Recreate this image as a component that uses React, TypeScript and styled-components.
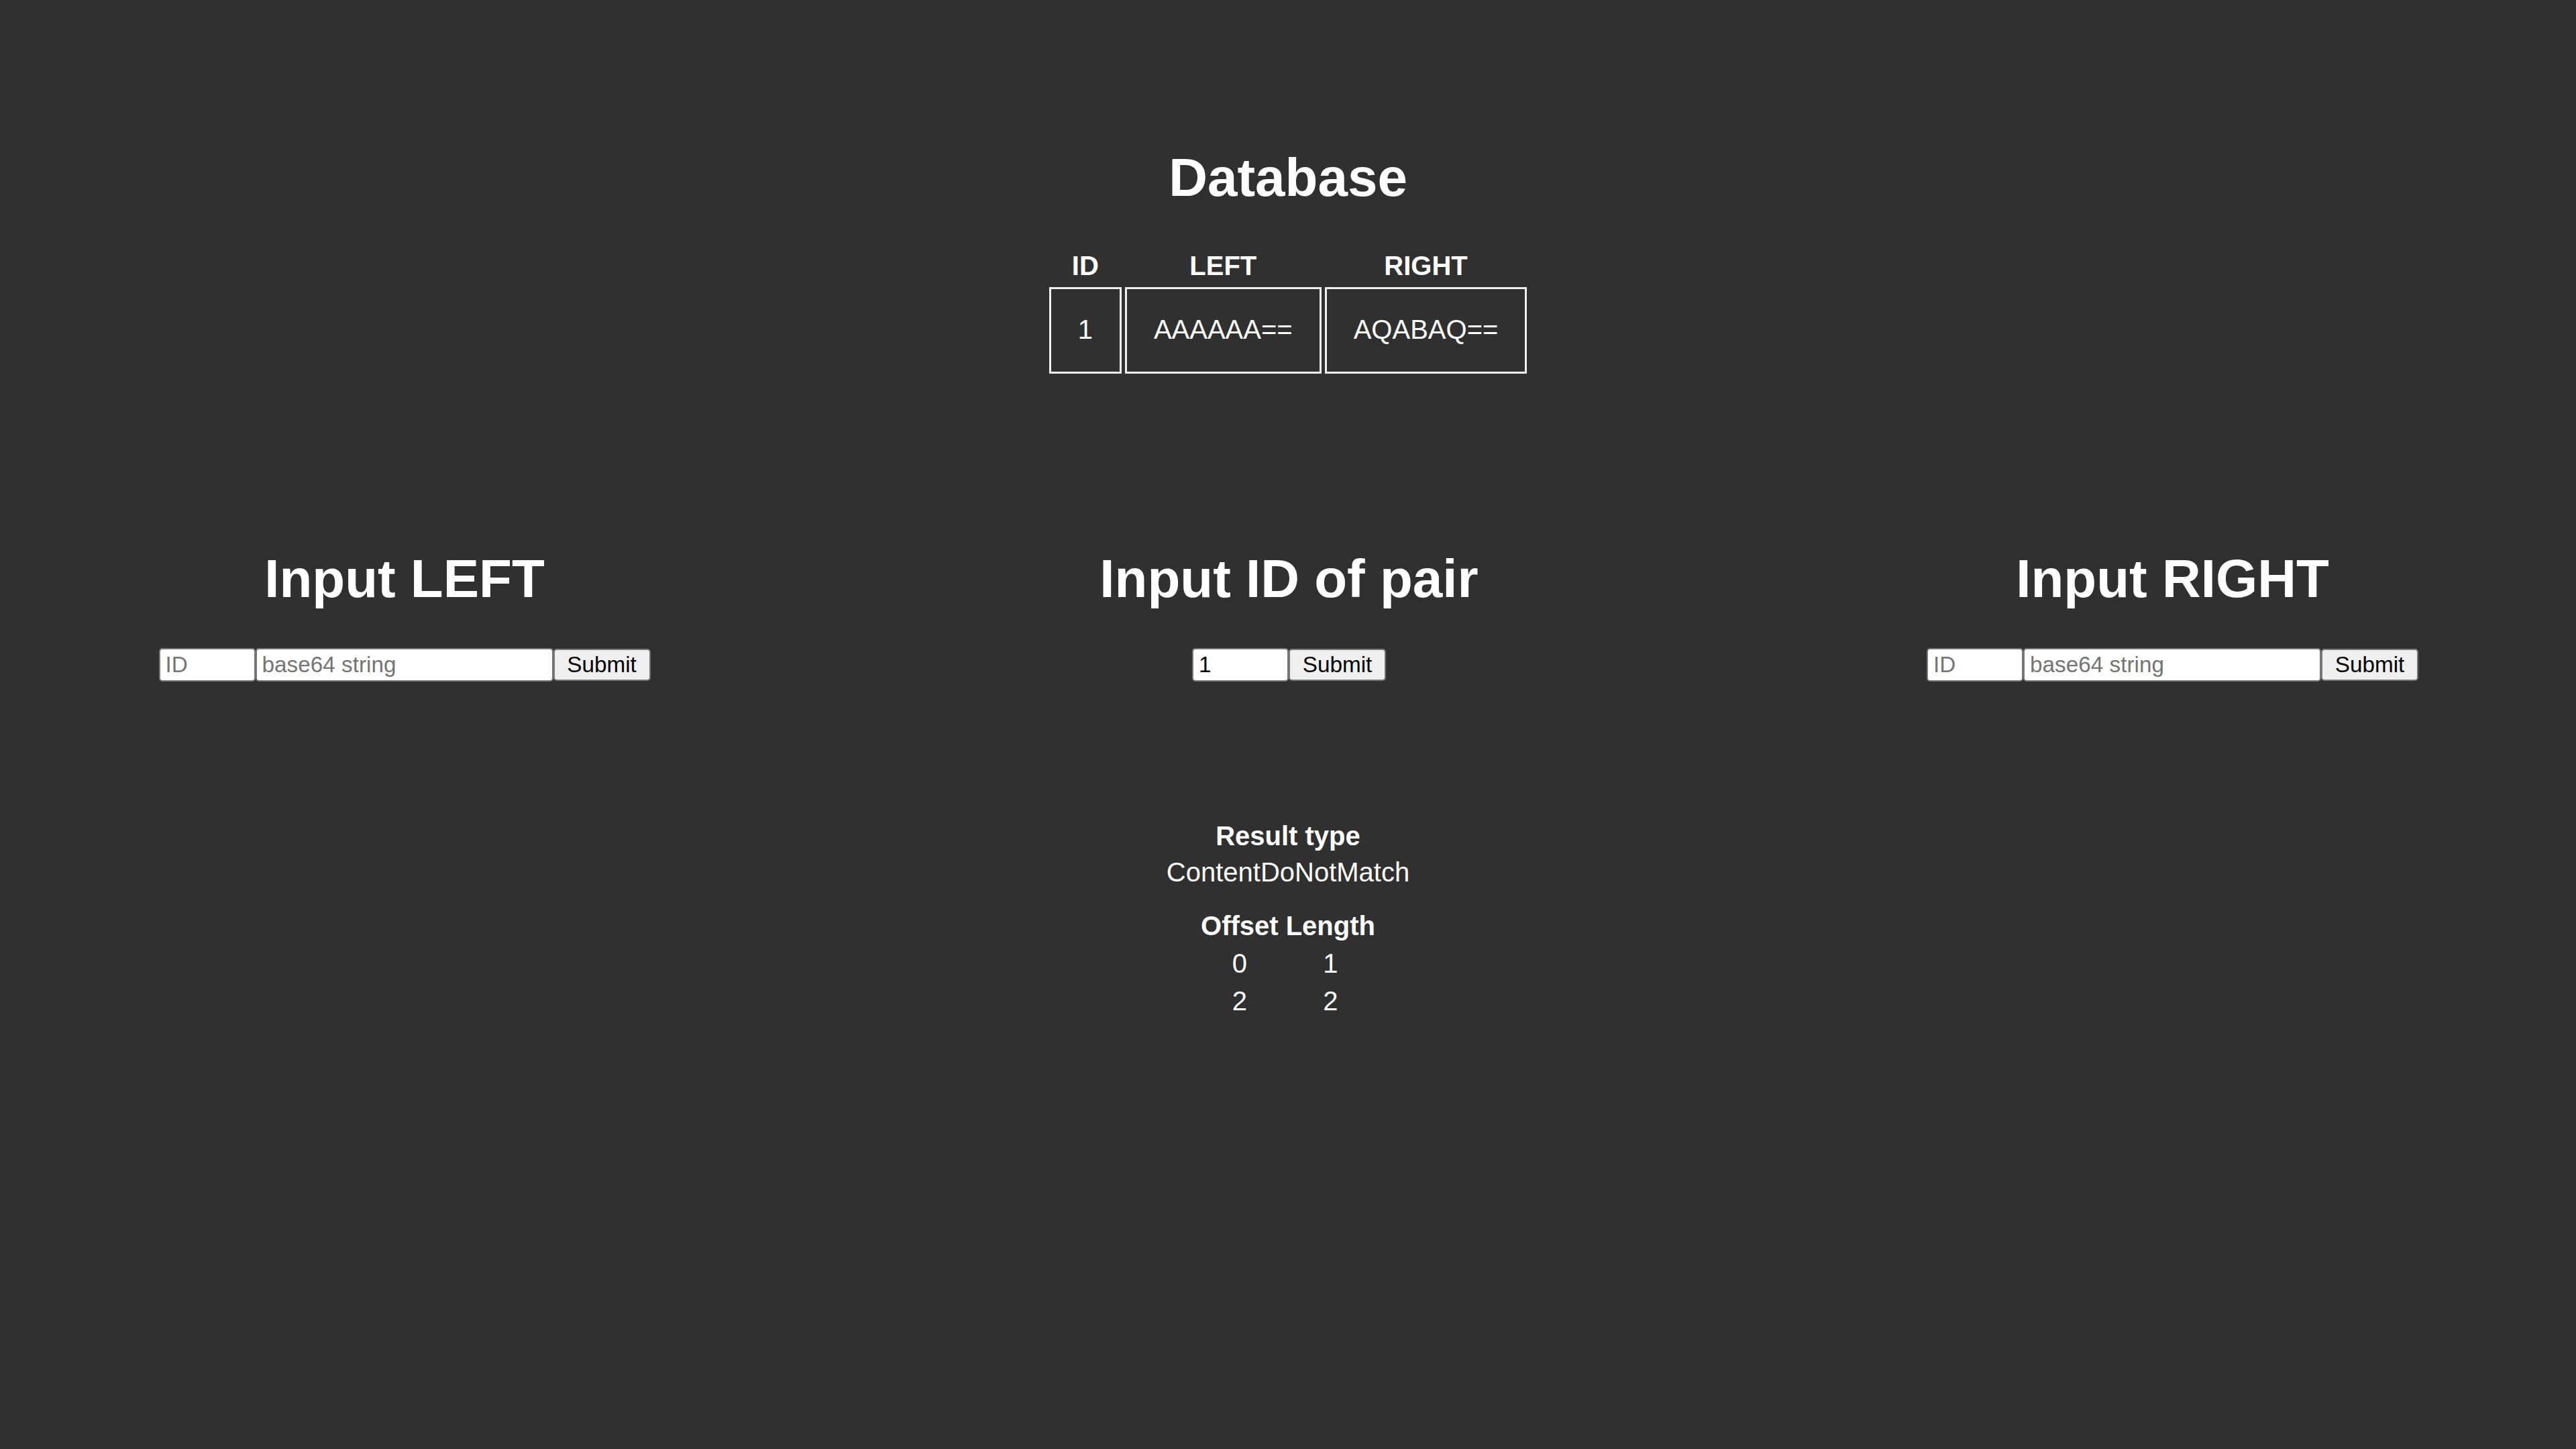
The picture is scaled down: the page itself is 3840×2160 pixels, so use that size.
import React from "react";
import styled, { createGlobalStyle } from "styled-components";

const GlobalStyle = createGlobalStyle`
  html, body {
    margin: 0;
    padding: 0;
    background: #303030;
  }
  body {
    font-family: "Liberation Sans", Arial, sans-serif;
    color: #ffffff;
    min-height: 2160px;
  }
  #root {
    min-height: 2160px;
    background: #303030;
  }
`;

const Page = styled.main`
  padding: 0 20px;
  font-family: "Liberation Sans", Arial, sans-serif;
  color: #ffffff;
`;

const DatabaseSection = styled.section`
  padding-top: 219px;
  text-align: center;
`;

const Title = styled.h1<{ $gap?: number }>`
  margin: 0 0 ${(p) => p.$gap ?? 53}px;
  font-size: 80px;
  line-height: 92px;
  font-weight: 700;
  color: #ffffff;
  text-align: center;
  white-space: nowrap;
`;

const DbTable = styled.table`
  margin: 0 auto;
  border-collapse: separate;
  border-spacing: 5px;
  font-size: 40px;
  line-height: 46px;
`;

const HeadCell = styled.th<{ $pad?: string }>`
  padding: ${(p) => p.$pad ?? "4px 3px"};
  font-weight: 700;
  text-align: center;
  white-space: nowrap;
`;

const DataCell = styled.td`
  padding: 37px 40px 40px;
  border: 3px solid #f0f0f0;
  text-align: center;
  white-space: nowrap;
`;

const InputsGrid = styled.div`
  margin-top: 255px;
  display: grid;
  grid-template-columns: 1166px 1fr 1163px;
`;

const InputSection = styled.section`
  display: flex;
  flex-direction: column;
  align-items: center;
`;

const FormRow = styled.form`
  display: flex;
  align-items: center;
  height: 50px;
`;

const TextField = styled.input<{ $w: number }>`
  box-sizing: border-box;
  width: ${(p) => p.$w}px;
  height: 50px;
  margin: 0;
  padding: 0 8px;
  border: 2px solid #767676;
  border-radius: 5px;
  background: #ffffff;
  color: #000000;
  font-family: "Liberation Sans", Arial, sans-serif;
  font-size: 33.3px;
  outline: none;
  &::placeholder {
    color: #757575;
    opacity: 1;
  }
`;

const SubmitButton = styled.button`
  box-sizing: border-box;
  width: 145px;
  height: 48px;
  margin: 0;
  padding: 0;
  border: 2px solid #767676;
  border-radius: 5px;
  background: #efefef;
  color: #000000;
  font-family: "Liberation Sans", Arial, sans-serif;
  font-size: 33.3px;
  text-align: center;
  cursor: pointer;
`;

const ResultSection = styled.section`
  margin-top: 207px;
  display: flex;
  flex-direction: column;
  align-items: center;
  font-size: 40px;
  line-height: 46px;
  padding-bottom: 200px;
`;

const ResultLabel = styled.div`
  font-weight: 700;
  white-space: nowrap;
`;

const ResultValue = styled.div`
  margin-top: 8px;
  white-space: nowrap;
`;

const OffsetTable = styled.table`
  margin-top: 27px;
  border-collapse: separate;
  border-spacing: 5px;
  font-size: 40px;
  line-height: 46px;
`;

const OffsetCell = styled.td`
  padding: 3px 3px 2px;
  text-align: center;
`;

type Pair = { id: number; left: string; right: string };

const rows: Pair[] = [{ id: 1, left: "AAAAAA==", right: "AQABAQ==" }];
const diffs = [
  { offset: 0, length: 1 },
  { offset: 2, length: 2 },
];

function SideInput({ title }: { title: string }) {
  return (
    <InputSection>
      <Title $gap={57}>{title}</Title>
      <FormRow onSubmit={(e) => e.preventDefault()}>
        <TextField $w={144} placeholder="ID" />
        <TextField $w={444} placeholder="base64 string" />
        <SubmitButton type="submit">Submit</SubmitButton>
      </FormRow>
    </InputSection>
  );
}

export default function App() {
  return (
    <>
      <GlobalStyle />
      <Page>
        <DatabaseSection>
          <Title>Database</Title>
          <DbTable>
            <thead>
              <tr>
                <HeadCell>ID</HeadCell>
                <HeadCell>LEFT</HeadCell>
                <HeadCell>RIGHT</HeadCell>
              </tr>
            </thead>
            <tbody>
              {rows.map((r) => (
                <tr key={r.id}>
                  <DataCell>{r.id}</DataCell>
                  <DataCell>{r.left}</DataCell>
                  <DataCell>{r.right}</DataCell>
                </tr>
              ))}
            </tbody>
          </DbTable>
        </DatabaseSection>

        <InputsGrid>
          <SideInput title="Input LEFT" />
          <InputSection>
            <Title $gap={57}>Input ID of pair</Title>
            <FormRow onSubmit={(e) => e.preventDefault()}>
              <TextField $w={144} defaultValue="1" />
              <SubmitButton type="submit">Submit</SubmitButton>
            </FormRow>
          </InputSection>
          <SideInput title="Input RIGHT" />
        </InputsGrid>

        <ResultSection>
          <ResultLabel>Result type</ResultLabel>
          <ResultValue>ContentDoNotMatch</ResultValue>
          <OffsetTable>
            <thead>
              <tr>
                <HeadCell $pad="2px 3px">Offset</HeadCell>
                <HeadCell $pad="2px 3px">Length</HeadCell>
              </tr>
            </thead>
            <tbody>
              {diffs.map((d, i) => (
                <tr key={i}>
                  <OffsetCell>{d.offset}</OffsetCell>
                  <OffsetCell>{d.length}</OffsetCell>
                </tr>
              ))}
            </tbody>
          </OffsetTable>
        </ResultSection>
      </Page>
    </>
  );
}
